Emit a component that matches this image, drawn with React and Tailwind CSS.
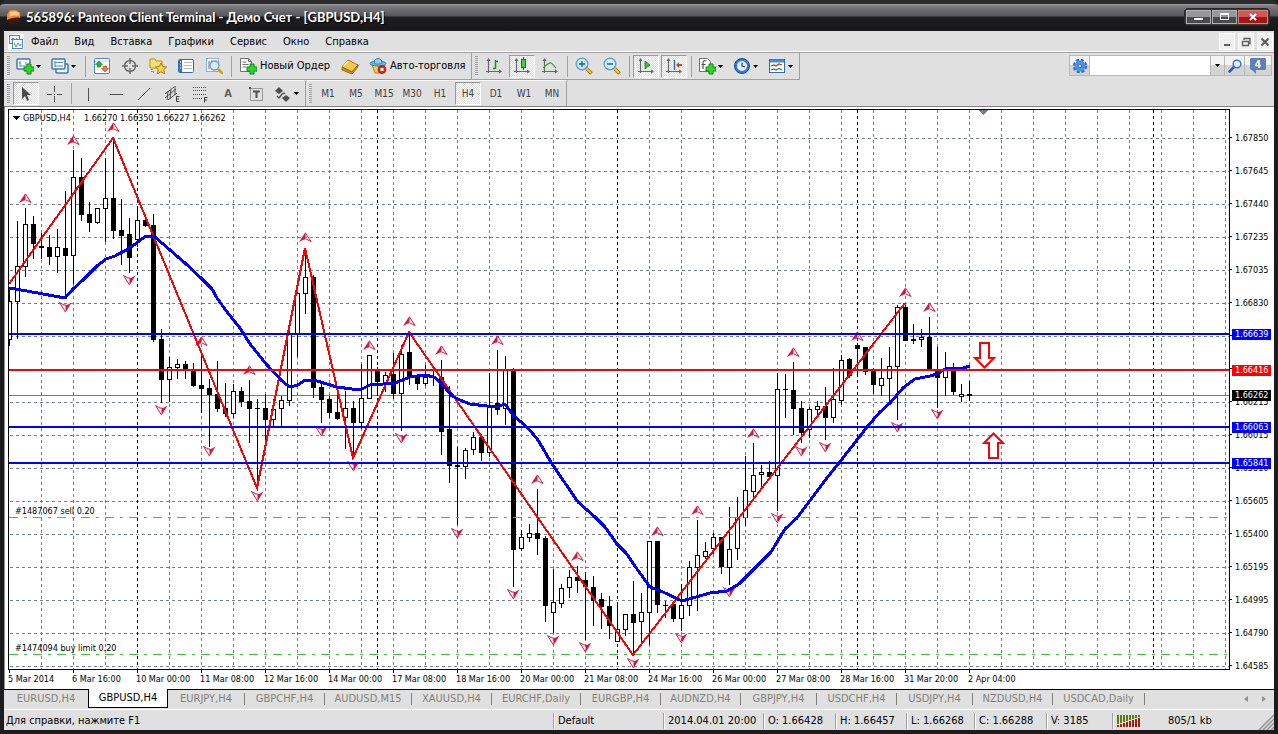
import React, { useState } from 'react';

// Plot geometry: one bar every 8px, a price step every 33px
const BAR = 8;
const PLOT_X = 9;
const PLOT_Y = 110;

// [high, low, body top, body bottom, kind] kind: 0 hollow, 1 filled
const bars = [
  [290, 346, 301, 340, 0], [221, 339, 266, 302, 0], [208, 277, 224, 267, 0], [216, 259, 224, 244, 1],
  [233, 259, 246, 248, 1], [235, 265, 247, 257, 1], [229, 273, 247, 257, 0], [191, 297, 248, 256, 1],
  [150, 284, 177, 256, 0], [158, 221, 177, 215, 1], [202, 232, 214, 223, 1], [208, 224, 208, 223, 0],
  [158, 242, 198, 209, 0], [138, 239, 198, 231, 1], [199, 265, 230, 236, 1], [218, 273, 234, 258, 1],
  [209, 247, 220, 240, 0], [215, 227, 220, 226, 1], [214, 342, 225, 340, 1], [329, 403, 339, 380, 1],
  [357, 402, 367, 380, 0], [359, 379, 364, 368, 0], [361, 379, 364, 369, 1], [363, 387, 370, 386, 1],
  [352, 413, 385, 389, 1], [379, 447, 388, 395, 1], [361, 412, 394, 409, 1], [383, 417, 408, 414, 1],
  [384, 418, 391, 414, 0], [387, 407, 391, 402, 1], [380, 443, 401, 409, 1], [399, 487, 408, 409, 1],
  [394, 443, 408, 420, 1], [399, 426, 409, 420, 0], [396, 426, 400, 409, 0], [330, 406, 333, 401, 0],
  [292, 357, 293, 334, 0], [250, 314, 277, 294, 0], [275, 398, 277, 388, 1], [383, 423, 387, 400, 1],
  [396, 418, 399, 413, 1], [394, 420, 412, 419, 1], [391, 449, 408, 418, 0], [401, 457, 408, 423, 1],
  [364, 429, 398, 423, 0], [355, 399, 355, 399, 0], [367, 396, 371, 382, 1], [372, 392, 375, 383, 0],
  [353, 399, 374, 394, 1], [345, 431, 354, 394, 0], [333, 385, 352, 378, 1], [374, 390, 377, 384, 1],
  [365, 386, 377, 384, 0], [370, 386, 377, 378, 1], [360, 455, 377, 432, 1], [386, 483, 429, 466, 1],
  [447, 525, 465, 467, 1], [448, 479, 450, 467, 0], [432, 455, 437, 450, 0], [434, 461, 437, 453, 1],
  [373, 457, 406, 453, 0], [350, 415, 403, 410, 1], [356, 425, 370, 409, 0], [368, 587, 369, 550, 1],
  [530, 551, 537, 549, 0], [524, 542, 533, 538, 0], [489, 555, 533, 539, 1], [536, 622, 538, 606, 1],
  [569, 633, 602, 613, 0], [584, 608, 588, 604, 0], [570, 598, 577, 588, 0], [566, 593, 577, 581, 1],
  [572, 640, 580, 587, 1], [576, 626, 587, 601, 1], [593, 629, 599, 607, 1], [596, 639, 606, 626, 1],
  [605, 642, 629, 642, 0], [614, 636, 614, 630, 0], [581, 654, 614, 623, 1], [593, 643, 612, 622, 0],
  [541, 645, 541, 613, 0], [541, 613, 541, 605, 1], [601, 618, 605, 606, 1], [602, 622, 604, 619, 1],
  [584, 631, 605, 619, 0], [561, 616, 567, 606, 0], [520, 611, 555, 568, 0], [542, 559, 551, 557, 0],
  [533, 554, 537, 549, 0], [537, 574, 537, 567, 1], [507, 585, 549, 568, 0], [497, 560, 517, 549, 0],
  [456, 526, 490, 518, 0], [443, 498, 475, 492, 0], [465, 488, 472, 475, 0], [461, 477, 472, 477, 1],
  [373, 511, 389, 476, 0], [374, 418, 389, 390, 1], [362, 435, 390, 409, 1], [401, 443, 408, 433, 1],
  [407, 438, 409, 430, 0], [401, 415, 406, 410, 0], [387, 440, 406, 418, 1], [368, 423, 399, 418, 0],
  [355, 405, 360, 401, 0], [358, 378, 359, 376, 1], [343, 375, 345, 349, 1], [347, 375, 347, 372, 1],
  [368, 394, 370, 385, 1], [358, 396, 378, 386, 0], [347, 401, 366, 379, 0], [305, 420, 307, 367, 0],
  [305, 341, 307, 341, 1], [324, 344, 339, 341, 1], [329, 347, 337, 340, 0], [317, 370, 337, 370, 1],
  [347, 408, 370, 378, 1], [352, 396, 370, 378, 0], [363, 395, 370, 392, 1], [384, 402, 394, 397, 0],
  [381, 401, 394, 396, 1],
];

const zigzag = '9,284 113,138 257,488 305,248 353,458 409,332 633,655 905,303';

const average =
  '9,288 27,291 43,294 65,298 73,289 83,280 97,266 106,259 115,256 130,248 146,236 155,237 170,250 185,263 202,279 212,289 ' +
  '217,298 227,312 240,328 250,344 267,365 282,381 290,387 298,385 305,380 317,381 337,387 352,389 362,389 370,385 383,384 ' +
  '395,383 410,377 425,375 434,377 442,384 452,396 460,400 470,404 487,406 499,406 505,404 513,415 528,428 538,440 552,464 ' +
  '578,502 595,517 605,527 617,544 626,553 637,569 650,587 663,592 682,601 710,593 727,591 739,584 753,570 771,552 785,529 ' +
  '797,518 827,478 835,468 857,440 867,427 880,412 890,403 903,388 915,379 930,376 937,374 945,369 963,368 970,366';

const fractalsUp = [
  [25, 198], [73, 140], [113, 127], [201, 341], [249, 370], [305, 237], [369, 345], [409, 321], [441, 350], [497, 340],
  [537, 479], [577, 556], [657, 531], [697, 510], [753, 433], [793, 352], [857, 336], [905, 292], [929, 307],
];
const fractalsDown = [
  [65, 307], [129, 280], [161, 410], [209, 451], [257, 496], [321, 431], [353, 466], [401, 438], [457, 533], [513, 594],
  [553, 640], [585, 647], [633, 663], [681, 638], [729, 592], [777, 518], [801, 451], [825, 447], [897, 427], [937, 414],
];

const gridX = Array.from({ length: 38 }, (_, i) => 41 + i * 32);
const gridY = Array.from({ length: 17 }, (_, i) => 138 + i * 33);
const weekLines = [137, 377, 617, 857, 1153];

const prices = [
  '1.67850', '1.67645', '1.67440', '1.67235', '1.67035', '1.66830', '', '', '1.66215', '1.66015', '1.65810',
  '1.65605', '1.65400', '1.65195', '1.64995', '1.64790', '1.64585',
];

const tags = [
  { price: '1.66639', y: 334, className: 'bg-[#0000ff]' },
  { price: '1.66416', y: 370, className: 'bg-[#ff0000]' },
  { price: '1.66262', y: 395, className: 'bg-black' },
  { price: '1.66063', y: 427, className: 'bg-[#0000ff]' },
  { price: '1.65841', y: 463, className: 'bg-[#0000ff]' },
];

const times = [
  '5 Mar 2014', '6 Mar 16:00', '10 Mar 00:00', '11 Mar 08:00', '12 Mar 16:00', '14 Mar 00:00', '17 Mar 08:00',
  '18 Mar 16:00', '20 Mar 00:00', '21 Mar 08:00', '24 Mar 16:00', '26 Mar 00:00', '27 Mar 08:00', '28 Mar 16:00',
  '31 Mar 20:00', '2 Apr 04:00',
];

const tabs = [
  { name: 'EURUSD,H4', width: 'w-[84px]' },
  { name: 'GBPUSD,H4', width: 'w-[80px]' },
  { name: 'EURJPY,H4', width: 'w-[77px]' },
  { name: 'GBPCHF,H4', width: 'w-[80px]' },
  { name: 'AUDUSD,M15', width: 'w-[87px]' },
  { name: 'XAUUSD,H4', width: 'w-[80px]' },
  { name: 'EURCHF,Daily', width: 'w-[89px]' },
  { name: 'EURGBP,H4', width: 'w-[80px]' },
  { name: 'AUDNZD,H4', width: 'w-[80px]' },
  { name: 'GBPJPY,H4', width: 'w-[76px]' },
  { name: 'USDCHF,H4', width: 'w-[80px]' },
  { name: 'USDJPY,H4', width: 'w-[76px]' },
  { name: 'NZDUSD,H4', width: 'w-[80px]' },
  { name: 'USDCAD,Daily', width: 'w-[92px]' },
];

const menu = ['Файл', 'Вид', 'Вставка', 'Графики', 'Сервис', 'Окно', 'Справка'];
const periods = ['M1', 'M5', 'M15', 'M30', 'H1', 'H4', 'D1', 'W1', 'MN'];

const PRESSED =
  'border border-t-[#9a9a9a] border-l-[#9a9a9a] border-r-white border-b-white bg-[repeating-conic-gradient(#e0e0e0_0_25%,#fafafa_0_50%)] bg-[length:2px_2px]';

/* ---------- icons ---------- */

const Icon = ({ children, size = 18 }) => (
  <svg width={size} height={size} viewBox="0 0 18 18" fill="none" className="shrink-0" aria-hidden="true">
    {children}
  </svg>
);

const PlusBadge = () => (
  <path d="M11 7h4v3h3v4h-3v3h-4v-3H8v-4h3z" fill="#2fd52f" stroke="#0c8a0c" />
);

const NewChartIcon = () => (
  <Icon>
    <rect x="1" y="2" width="13" height="10" rx="1" fill="#fff" stroke="#3c78b8" strokeWidth="1.5" />
    <path d="M4 4v6M3 6h2M4 9h8M10 5v3" stroke="#5a8cc4" />
    <PlusBadge />
  </Icon>
);

const ProfilesIcon = () => (
  <Icon>
    <rect x="5" y="7" width="12" height="9" rx="1" fill="#fff" stroke="#3c78b8" strokeWidth="1.5" />
    <rect x="1" y="2" width="13" height="10" rx="1" fill="#f4f8fc" stroke="#3c78b8" strokeWidth="1.5" />
    <path d="M3 5.500h9M3 9h9M4 4v6" stroke="#5a8cc4" />
  </Icon>
);

const MarketWatchIcon = () => (
  <Icon>
    <rect x="1.5" y="1.5" width="15" height="15" rx="1" fill="#fff" stroke="#4a86c4" />
    <path d="M2 4h14" stroke="#b8d0e8" />
    <path d="M6 4l3.500 3.500H7.500V10h-3V7.500h-2z" fill="#25b825" stroke="#0c7a0c" strokeWidth=".6" />
    <path d="M12 15l-3.500-3.500h2V9h3v2.500h2z" fill="#f08040" stroke="#b8340c" strokeWidth=".6" />
  </Icon>
);

const DataWindowIcon = () => (
  <Icon>
    <circle cx="9" cy="9" r="5.500" stroke="#6c6c6c" strokeWidth="1.500" />
    <path d="M9 1v6M9 11v6M1 9h6M11 9h6" stroke="#6c6c6c" strokeWidth="1.500" />
  </Icon>
);

const NavigatorIcon = () => (
  <Icon>
    <path d="M1 2h5l1 2h6v7H1z" fill="#fbe070" stroke="#b8921c" />
    <path d="M3 12v3h3" stroke="#555" strokeDasharray="1 1" />
    <path d="M12 6l1.700 3.600 4 .4-3 2.700.9 4-3.600-2-3.600 2 .9-4-3-2.700 4-.4z" fill="#fcd63c" stroke="#b07c10" />
  </Icon>
);

const TerminalIcon = () => (
  <Icon>
    <rect x="1.500" y="2.500" width="15" height="13" rx="1" fill="#fff" stroke="#2f6cb0" />
    <path d="M2 3h3v12H2z" fill="#2f78c8" />
    <path d="M3 5h1M3 8h1M3 11h1" stroke="#fff" />
    <path d="M7 5.500h8M7 8.500h8M7 11.500h8" stroke="#a8bcd8" />
  </Icon>
);

const TesterIcon = () => (
  <Icon>
    <rect x="1.500" y="1.500" width="12" height="13" fill="#fff" stroke="#8ab0d4" />
    <path d="M4 4v8M7 3v6M11 3v5" stroke="#606c78" />
    <circle cx="9.500" cy="8.500" r="4.500" fill="#d4eafa" fillOpacity=".85" stroke="#6a9cc8" strokeWidth="1.300" />
    <path d="M13 12l4 4" stroke="#d8a020" strokeWidth="2.500" strokeLinecap="round" />
  </Icon>
);

const NewOrderIcon = () => (
  <Icon>
    <path d="M1.500 1.500h8l3 3v10h-11z" fill="#fff" stroke="#707070" />
    <path d="M9.500 1.500v3h3M3.500 5h4M3.500 7.500h6M3.500 10h4" stroke="#707070" />
    <PlusBadge />
  </Icon>
);

const BookIcon = () => (
  <Icon>
    <path d="M1 10l6-7 10 5-6 7z" fill="#f6c84c" stroke="#a87414" />
    <path d="M1 10v3l10 4 6-7V8l-6 7z" fill="#d09020" stroke="#8c5c0c" strokeWidth=".8" />
    <path d="M7 4l-5 6" stroke="#fdeaa0" strokeWidth="1.500" />
  </Icon>
);

const AutoTradeIcon = () => (
  <Icon>
    <path d="M3 8l3 8h7l3-8z" fill="#f4cc50" stroke="#b08018" />
    <ellipse cx="9" cy="6.500" rx="8" ry="2.500" fill="#6cb8e4" stroke="#3c84b8" />
    <path d="M5 6c0-6 8-6 8 0-2 1.500-6 1.500-8 0z" fill="#8cccf0" stroke="#3c84b8" />
    <circle cx="13" cy="12.500" r="4" fill="#e02818" stroke="#a01008" strokeWidth=".7" />
    <rect x="11.500" y="11" width="3" height="3" fill="#fff" />
  </Icon>
);

const Axes = () => (
  <path d="M3.500 2v14M1 14.500h15M2 4l1.500-2L5 4M14 13l2 1.500-2 1.500" stroke="#686868" strokeWidth="1.200" />
);

const BarsIcon = () => (
  <Icon>
    <Axes />
    <path d="M10.500 3v9M8 11.500h2M11 4.500h2" stroke="#189018" strokeWidth="1.500" />
  </Icon>
);

const CandlesIcon = () => (
  <Icon>
    <Axes />
    <path d="M10.500 0v13" stroke="#0c7a0c" />
    <rect x="8.500" y="2.500" width="4" height="8" fill="#38d838" stroke="#0c7a0c" />
  </Icon>
);

const LineIcon = () => (
  <Icon>
    <Axes />
    <path d="M2 11c3-2 5-6 8-5 2 1 3 3 5 5" stroke="#30a030" strokeWidth="1.300" />
  </Icon>
);

const ZoomIcon = ({ out }) => (
  <Icon>
    <path d="M11.500 11.500l5 5" stroke="#9c6c10" strokeWidth="3.500" />
    <path d="M11.500 11.500l4.500 4.500" stroke="#f4c83c" strokeWidth="2" />
    <circle cx="7" cy="7" r="5.800" fill="#d8effc" stroke="#58a0d8" strokeWidth="1.400" />
    <path d={out ? 'M4 7h6' : 'M4 7h6M7 4v6'} stroke="#3478b4" strokeWidth="1.800" />
  </Icon>
);

const AutoScrollIcon = () => (
  <Icon>
    <Axes />
    <path d="M8 4l5 4-5 4z" fill="#30c830" stroke="#0c800c" strokeWidth=".8" />
  </Icon>
);

const ShiftIcon = () => (
  <Icon>
    <Axes />
    <path d="M9.500 3v10" stroke="#2868b0" strokeWidth="1.400" />
    <path d="M11 8l3-3v2h3v2h-3v2z" fill="#c84818" />
  </Icon>
);

const IndicatorsIcon = () => (
  <Icon>
    <path d="M1.500 1.500h8l3 3v10h-11z" fill="#fff" stroke="#707070" />
    <path d="M8 4c-2-1-3 0-3 2v6M3.500 7.500h4" stroke="#505050" strokeWidth="1.200" />
    <PlusBadge />
  </Icon>
);

const ClockIcon = () => (
  <Icon>
    <circle cx="9" cy="9" r="7.500" fill="#2c7cd8" stroke="#144c98" />
    <circle cx="9" cy="9" r="5" fill="#e8f2fc" />
    <path d="M9 5.500V9l3 1" stroke="#404040" strokeWidth="1.200" />
  </Icon>
);

const TemplateIcon = () => (
  <Icon>
    <rect x="1.500" y="2.500" width="15" height="13" fill="#fff" stroke="#2f6cb0" />
    <path d="M2 4h14" stroke="#4a8ad0" strokeWidth="3" />
    <path d="M3 9l3-1 2 1 3-2 3 1" stroke="#a83820" strokeWidth="1.200" />
    <path d="M3 13l3-1 2 1 3-1.500 3 1.500" stroke="#208c30" strokeWidth="1.200" />
  </Icon>
);

const PointerIcon = () => (
  <Icon>
    <path d="M5 2v12l3-3 2 5 2-1-2-5h4z" fill="#4c4c4c" />
  </Icon>
);
const CrossIcon = () => (
  <Icon>
    <path d="M9.500 1v6M9.500 11v6M2 9.500h5M12 9.500h5M9 9.500h1" stroke="#505050" />
  </Icon>
);
const VLineIcon = () => (
  <Icon>
    <path d="M9.500 3v13" stroke="#505050" />
  </Icon>
);
const HLineIcon = () => (
  <Icon>
    <path d="M3 9.500h13" stroke="#505050" />
  </Icon>
);
const TrendIcon = () => (
  <Icon>
    <path d="M3 15L15 3" stroke="#505050" />
  </Icon>
);
const ChannelIcon = () => (
  <Icon>
    <path d="M2 13L13 4M2 9l9-7M5 15l9-7M5 6l-1 9M8 4l-1 10M12 1v9" stroke="#505050" />
    <path d="M16.500 11.500h-3v5h3M13.500 14h2.500" stroke="#404040" />
  </Icon>
);
const FiboIcon = () => (
  <Icon>
    <path d="M2 2.500h14M2 5.500h14M2 9.500h14M2 13.500h9" stroke="#505050" strokeDasharray="1 1" />
    <path d="M16.500 12.500h-3v5M13.500 15h2.500" stroke="#404040" />
  </Icon>
);
const LabelIcon = () => (
  <Icon>
    <rect x="3.500" y="3.500" width="12" height="12" stroke="#505050" strokeDasharray="1 1" />
    <path d="M6 6.500h7M9.500 6v7" stroke="#505050" strokeWidth="2" />
    <path d="M2 2h2v2H2z" fill="#505050" />
  </Icon>
);
const ArrowsIcon = () => (
  <Icon>
    <path d="M5 2l4 4-4 3-4-3zM12 10l4 3-4 4-4-4z" fill="#505050" />
    <path d="M3 11l2 2 3-4 3-1" stroke="#505050" strokeWidth="1.400" />
  </Icon>
);

const Caret = () => (
  <svg width="5" height="3" viewBox="0 0 5 3" className="shrink-0" aria-hidden="true">
    <path d="M0 0h5L2.500 3z" fill="#000" />
  </svg>
);

/* ---------- toolbar parts ---------- */

const Grip = () => (
  <div className="w-2 shrink-0 flex justify-center">
    <div className="w-[3px] h-5 bg-[repeating-linear-gradient(#a0a0a0_0_1px,transparent_1px_2px)]" />
  </div>
);

const Separator = () => (
  <div className="w-1.5 shrink-0 flex justify-center">
    <div className="w-px h-[21px] bg-[#a0a0a0]" />
  </div>
);

const ToolButton = ({ label, icon, pressed, menu: hasMenu }) => (
  <button
    type="button"
    aria-label={label}
    className={`h-6 shrink-0 flex items-center ${hasMenu ? 'w-[35px] pl-1 gap-0.5' : 'w-7 justify-center'}`}
  >
    {pressed ? <span className={`w-[26px] h-[23px] flex items-center justify-center ${PRESSED}`}>{icon}</span> : icon}
    {hasMenu && <Caret />}
  </button>
);

const TextButton = ({ icon, children }) => (
  <button type="button" className="h-6 shrink-0 flex items-center gap-[3px] pl-[5px] pr-1.5">
    {icon}
    <span>{children}</span>
  </button>
);

const TitleBar = () => (
  <header className="h-[31px] shrink-0 pt-1 px-1.5 flex items-center rounded-t-md border-t-4 border-[#2c2c2e] bg-[linear-gradient(#a2a2a6_0,#7c7c80_2px,#57575b_12px,#1f1f22_13px,#161618_100%)]">
    <svg width="16" height="16" viewBox="0 0 16 16" className="shrink-0 -mt-1.5" aria-hidden="true">
      <path d="M3 2h10l2 3v6l-3 4H4l-3-3V5z" fill="#3c1808" />
      <path d="M3 2c3-2 8-1 11 1 1 2 1 4 0 6C10 8 5 9 1 11V5z" fill="#f4862c" />
      <path d="M4 3c3-1 6-1 9 1v3C9 6 5 7 3 8z" fill="#fcc888" />
    </svg>
    <h1 className="ml-1 -mt-1.5 flex-1 truncate font-[Lato,'Open_Sans',sans-serif] font-bold text-[13px] leading-4 text-white [text-shadow:1px_1px_1px_#000]">
      565896: Panteon Client Terminal - Демо Счет - [GBPUSD,H4]
    </h1>
    <div className="-mt-1.5 mr-0.5 flex gap-px rounded-sm border border-[#2a2a2a] p-px bg-[#3a3a3c]">
      <button type="button" aria-label="Свернуть" className="w-[25px] h-3.5 flex items-center justify-center border border-[#b0b0b0] bg-[linear-gradient(#98989c_50%,#4a4a4e_50%)]">
        <span className="w-[9px] h-0.5 mt-1 bg-white" />
      </button>
      <button type="button" aria-label="Развернуть" className="w-[25px] h-3.5 flex items-center justify-center border border-[#b0b0b0] bg-[linear-gradient(#98989c_50%,#4a4a4e_50%)]">
        <span className="w-[9px] h-[7px] border border-t-2 border-white" />
      </button>
      <button type="button" aria-label="Закрыть" className="w-[30px] h-3.5 flex items-center justify-center border border-[#d08080] bg-[linear-gradient(#d05858_50%,#a81414_50%)]">
        <svg width="8" height="8" viewBox="0 0 8 8" aria-hidden="true">
          <path d="M1 1l6 6M7 1L1 7" stroke="#fff" strokeWidth="2" />
        </svg>
      </button>
    </div>
  </header>
);

const MdiButton = ({ label, children }) => (
  <button type="button" aria-label={label} className="w-4 h-[17px] flex items-center justify-center bg-[#f0f0f0] border border-white">
    <svg width="10" height="10" viewBox="0 0 10 10" fill="none" stroke="#606060" aria-hidden="true">
      {children}
    </svg>
  </button>
);

const MenuBar = () => (
  <nav className="h-[22px] shrink-0 pl-1 flex items-center border-b border-[#a0a0a0] shadow-[inset_0_-1px_0_#fff]">
    <svg width="16" height="16" viewBox="0 0 16 16" fill="none" className="shrink-0" aria-hidden="true">
      <rect width="16" height="16" fill="#fff" />
      <rect x="1.500" y="1.500" width="10" height="8" fill="#eef5fc" stroke="#4a86c8" />
      <rect x="4.500" y="5.500" width="10" height="9" fill="#fff" stroke="#4a86c8" />
      <path d="M3 6l2-2 2 2 2-2M6 9l2 4 2-4 2 3 1-2" stroke="#4a86c8" />
    </svg>
    <ul className="flex-1 flex items-center gap-4 ml-[7px] text-[11px]">
      {menu.map((item) => (
        <li key={item}>
          <button type="button">{item}</button>
        </li>
      ))}
    </ul>
    <div className="flex gap-[3px] pr-px">
      <MdiButton label="Свернуть окно">
        <path d="M2 8h6" strokeWidth="2" />
      </MdiButton>
      <MdiButton label="Восстановить окно">
        <path d="M3 3V1.500h6v5H7.500M1.500 4.500h6v4h-6z" strokeWidth="1.300" />
      </MdiButton>
      <MdiButton label="Закрыть окно">
        <path d="M1.500 1.500l7 7M8.500 1.500l-7 7" strokeWidth="2.200" />
      </MdiButton>
    </div>
  </nav>
);

const MainToolbar = () => (
  <div className="flex items-start justify-between">
    <div className="h-[27px] flex items-center border-r border-b border-[#a0a0a0]">
      <Grip />
      <ToolButton label="Новый график" icon={<NewChartIcon />} menu />
      <ToolButton label="Профили" icon={<ProfilesIcon />} menu />
      <Separator />
      <ToolButton label="Обзор рынка" icon={<MarketWatchIcon />} />
      <ToolButton label="Окно данных" icon={<DataWindowIcon />} />
      <ToolButton label="Навигатор" icon={<NavigatorIcon />} />
      <ToolButton label="Терминал" icon={<TerminalIcon />} />
      <ToolButton label="Тестер стратегий" icon={<TesterIcon />} />
      <Separator />
      <TextButton icon={<NewOrderIcon />}>Новый Ордер</TextButton>
      <ToolButton label="Редактор" icon={<BookIcon />} />
      <TextButton icon={<AutoTradeIcon />}>Авто-торговля</TextButton>
      <div className="w-px self-stretch bg-[#a0a0a0]" />
      <Grip />
      <ToolButton label="Бары" icon={<BarsIcon />} />
      <ToolButton label="Свечи" icon={<CandlesIcon />} pressed />
      <ToolButton label="Линия" icon={<LineIcon />} />
      <Separator />
      <ToolButton label="Увеличить" icon={<ZoomIcon />} />
      <ToolButton label="Уменьшить" icon={<ZoomIcon out />} />
      <Separator />
      <ToolButton label="Автопрокрутка" icon={<AutoScrollIcon />} pressed />
      <ToolButton label="Сдвиг графика" icon={<ShiftIcon />} pressed />
      <Separator />
      <ToolButton label="Индикаторы" icon={<IndicatorsIcon />} menu />
      <ToolButton label="Периоды" icon={<ClockIcon />} menu />
      <ToolButton label="Шаблоны" icon={<TemplateIcon />} menu />
    </div>

    {/* Search */}
    <div className="mt-0.5 mr-0.5 h-[21px] flex border border-[#b8b8b8] divide-x divide-[#b8b8b8] bg-[#e4e4e4]">
      <button type="button" aria-label="Настройки поиска" className="w-5 flex items-center justify-center bg-[linear-gradient(#f4f4f4_50%,#d4d4d4_50%)]">
        <svg width="16" height="16" viewBox="0 0 16 16" aria-hidden="true">
          <circle cx="8" cy="8" r="6" fill="none" stroke="#2c6cc8" strokeWidth="2.500" strokeDasharray="3 1.710" />
          <circle cx="8" cy="8" r="5.500" fill="#4a90e8" />
          <circle cx="8" cy="8" r="1.800" fill="#e8f0fc" stroke="#2c6cc8" />
        </svg>
      </button>
      <input type="text" aria-label="Поиск" className="w-[121px] px-1 bg-white outline-none" />
      <button type="button" aria-label="История поиска" className="w-3.5 flex items-center justify-center bg-[linear-gradient(#f4f4f4_50%,#d4d4d4_50%)]">
        <Caret />
      </button>
      <button type="button" aria-label="Найти" className="w-5 flex items-center justify-center bg-[linear-gradient(#f4f4f4_50%,#d4d4d4_50%)]">
        <svg width="14" height="14" viewBox="0 0 14 14" fill="none" aria-hidden="true">
          <path d="M6 8l-4.500 4.500" stroke="#2c5cb0" strokeWidth="2.500" strokeLinecap="round" />
          <circle cx="9" cy="5" r="3.800" fill="#e8f2fc" stroke="#3c74cc" strokeWidth="1.500" />
        </svg>
      </button>
      <button type="button" aria-label="Сообщения" className="w-[26px] flex items-center justify-center bg-[linear-gradient(#f4f4f4_50%,#d4d4d4_50%)]">
        <svg width="16" height="16" viewBox="0 0 16 16" aria-hidden="true">
          <path d="M1 0h14l1 1v10l-1 1H6v4l-4-4H1l-1-1V1z" fill="#6080b4" />
          <text x="8" y="10" textAnchor="middle" className="font-bold text-[10px]" fill="#fff">4</text>
        </svg>
      </button>
    </div>
  </div>
);

const DrawToolbar = () => {
  const [period, setPeriod] = useState('H4');
  return (
    <div className="flex border-b border-[#808080]">
      <div className="h-[26px] flex items-center border-t border-t-[#f8f8f8] border-r border-r-[#a0a0a0]">
        <Grip />
        <ToolButton label="Курсор" icon={<PointerIcon />} pressed />
        <ToolButton label="Перекрестие" icon={<CrossIcon />} />
        <Separator />
        <ToolButton label="Вертикальная линия" icon={<VLineIcon />} />
        <ToolButton label="Горизонтальная линия" icon={<HLineIcon />} />
        <ToolButton label="Трендовая линия" icon={<TrendIcon />} />
        <ToolButton label="Канал" icon={<ChannelIcon />} />
        <ToolButton label="Фибоначчи" icon={<FiboIcon />} />
        <ToolButton label="Текст" icon={<span className="font-bold text-[11px] text-[#606060]">A</span>} />
        <ToolButton label="Метка" icon={<LabelIcon />} />
        <ToolButton label="Стрелки" icon={<ArrowsIcon />} menu />
        <div className="w-px self-stretch bg-[#a0a0a0]" />
        <Grip />
        {periods.map((p) => (
          <button
            key={p}
            type="button"
            onClick={() => setPeriod(p)}
            className="w-7 h-6 flex items-center justify-center text-[10px] text-[#404040]"
          >
            <span className={`w-[26px] h-[23px] flex items-center justify-center ${p === period ? PRESSED : ''}`}>{p}</span>
          </button>
        ))}
      </div>
    </div>
  );
};

/* ---------- chart ---------- */

const Candle = ({ x, bar: [high, low, top, bottom, filled] }) => (
  <g>
    <rect x={x} y={high} width="1" height={low - high} fill="#000" />
    <rect x={x - 2} y={top} width="5" height={bottom - top} fill="#000" />
    {!filled && <rect x={x - 1} y={top + 1} width="3" height={Math.max(bottom - top - 2, 1)} fill="#fff" />}
  </g>
);

const Plot = () => (
  <svg className="block size-full" shapeRendering="crispEdges" role="img" aria-label="GBPUSD,H4">
    <g transform={`translate(${-PLOT_X} ${-PLOT_Y})`}>
      {/* Grid */}
      <g stroke="#708090" strokeDasharray="3 3">
        {gridX.map((x) => (
          <line key={x} x1={x + 0.5} x2={x + 0.5} y1="110" y2="669" />
        ))}
        {gridY.map((y) => (
          <line key={y} x1="10" x2="1229" y1={y + 0.5} y2={y + 0.5} />
        ))}
      </g>
      {weekLines.map((x) => (
        <g key={x}>
          <rect x={x} y="110" width="1" height="559" fill="#fff" />
          <line x1={x + 0.5} x2={x + 0.5} y1="110" y2="669" stroke="#000" strokeDasharray="3 3" />
        </g>
      ))}
      <rect x="9" y="395" width="100%" height="1" fill="#708090" />

      {bars.map((bar, i) => (
        <Candle key={i} x={PLOT_X + i * BAR} bar={bar} />
      ))}

      {/* Orders */}
      <g stroke="#32cd32" strokeDasharray="9 6 3 6">
        <line x1="9" x2="1229" y1="517.5" y2="517.5" />
        <line x1="9" x2="1229" y1="654.5" y2="654.5" />
      </g>
      <g className="font-['DejaVu_Sans_Condensed','DejaVu_Sans',sans-serif] text-[9px]">
        <text x="15" y="514">#1487067 sell 0.20</text>
        <text x="15" y="651">#1474094 buy limit 0.20</text>
        <path d="M12 116h8l-4 4z" />
        <text x="23" y="121">GBPUSD,H4</text>
        <text x="84" y="121">1.66270 1.66350 1.66227 1.66262</text>
      </g>

      {/* Fractals */}
      {fractalsUp.map(([x, y]) => (
        <g key={`${x}-${y}`} transform={`translate(${x} ${y})`} shapeRendering="auto">
          <path d="M.5-5L-6 5l5-2.500h1.500z" fill="#dc143c" />
          <path d="M.5-4L6 4.500 1 2" fill="none" stroke="#dc143c" />
        </g>
      ))}
      {fractalsDown.map(([x, y]) => (
        <g key={`${x}-${y}`} transform={`translate(${x} ${y})`} shapeRendering="auto">
          <path d="M.5 5.500L6.500-4.500 2-2H.5z" fill="#dc143c" />
          <path d="M.5 5L-5.500-4.500-1-2H1" fill="none" stroke="#dc143c" />
        </g>
      ))}

      <polyline points={zigzag} fill="none" stroke="#f00" strokeWidth="2" />
      <polyline points={average} fill="none" stroke="#00f" strokeWidth="3" strokeLinejoin="round" />

      {/* Levels */}
      <rect x="9" y="333" width="100%" height="2" fill="#00f" />
      <rect x="9" y="369" width="100%" height="2" fill="#f00" />
      <rect x="9" y="426" width="100%" height="2" fill="#00f" />
      <rect x="9" y="462" width="100%" height="2" fill="#00f" />

      <g fill="#fff" stroke="#f00" strokeWidth="2" shapeRendering="auto">
        <path d="M980 343h9v15h5l-9.500 9.500L975 358h5z" />
        <path d="M989 458h9V443h5l-9.500-9.500L984 443h5z" />
      </g>
      <path d="M979 110h9l-4.500 5z" fill="#708090" />
    </g>
  </svg>
);

const Chart = () => (
  <main className="flex-1 min-h-0 flex flex-col bg-white border-l border-[#909090] pl-[3px] pt-0.5 overflow-hidden">
    <div className="flex-1 min-h-0 flex">
      <div className="flex-1 min-w-0 border border-black overflow-hidden">
        <Plot />
      </div>
      <div className="relative w-11 shrink-0 pt-3 text-[9px]">
        {prices.map((price, i) => (
          <div key={i} className="h-[33px] flex items-center gap-[3px] leading-3">
            <span className="w-0.5 h-px bg-black" />
            {price}
          </div>
        ))}
        {tags.map(({ price, y, className }) => (
          <div
            key={price}
            className={`absolute left-0.5 w-[39px] h-[11px] pl-[3px] leading-[11px] text-white ${className}`}
            style={{ top: y - PLOT_Y - 4 }}
          >
            {price}
          </div>
        ))}
      </div>
    </div>
    <div className="h-[19px] shrink-0 flex text-[9px] leading-3">
      {times.map((time) => (
        <div key={time} className="w-16 shrink-0 whitespace-nowrap">
          <div className="ml-px w-px h-[3px] bg-black" />
          {time}
        </div>
      ))}
    </div>
  </main>
);

const ChartTabs = () => {
  const [active, setActive] = useState('GBPUSD,H4');
  return (
    <div className="h-[21px] shrink-0 flex items-start border-t border-black shadow-[inset_0_-1px_0_#fff]">
      <div className="flex flex-1 min-w-0" role="tablist">
        {tabs.map(({ name, width }) => (
          <button
            key={name}
            type="button"
            role="tab"
            aria-selected={name === active}
            onClick={() => setActive(name)}
            className={`shrink-0 flex items-center text-[11px] leading-3 ${width} ${
              name === active
                ? 'h-[19px] -mt-px justify-center bg-white border border-t-0 border-black text-black'
                : 'h-[18px] text-[#808078]'
            }`}
          >
            <span className="flex-1 text-center">{name}</span>
            {name !== active && name !== 'EURUSD,H4' && <span className="w-px h-3 bg-[#808078]" />}
          </button>
        ))}
      </div>
      <div className="h-[18px] flex items-center gap-3.5 pr-2">
        <svg width="4" height="6" viewBox="0 0 4 6" aria-hidden="true">
          <path d="M4 0v6L0 3z" fill="#909090" />
        </svg>
        <svg width="4" height="6" viewBox="0 0 4 6" aria-hidden="true">
          <path d="M0 0v6l4-3z" fill="#909090" />
        </svg>
      </div>
    </div>
  );
};

const StatusCell = ({ className, children }) => (
  <div className={`h-4 shrink-0 flex items-center pl-1 border-l border-[#a0a0a0] shadow-[inset_1px_0_0_#fff] whitespace-nowrap ${className}`}>
    {children}
  </div>
);

const StatusBar = () => (
  <footer className="h-5 shrink-0 pt-0.5 flex items-center text-[11px]">
    <p className="flex-1 truncate pl-0.5">Для справки, нажмите F1</p>
    <StatusCell className="w-[110px]">Default</StatusCell>
    <StatusCell className="w-[100px]">2014.04.01 20:00</StatusCell>
    <StatusCell className="w-[72px]">O: 1.66428</StatusCell>
    <StatusCell className="w-[71px]">H: 1.66457</StatusCell>
    <StatusCell className="w-[68px]">L: 1.66268</StatusCell>
    <StatusCell className="w-[72px]">C: 1.66288</StatusCell>
    <StatusCell className="w-[66px]">V: 3185</StatusCell>
    <StatusCell className="w-[148px]">
      <svg width="24" height="12" viewBox="0 0 24 12" shapeRendering="crispEdges" aria-hidden="true">
        {[0, 1, 2, 3, 4, 5, 6, 7].map((i) => (
          <g key={i}>
            <rect x={i * 3} y="0" width="2" height={9 - i} fill="#5c7c0c" />
            <rect x={i * 3} y={10 - i} width="2" height={2 + i} fill="#a81c0c" />
          </g>
        ))}
      </svg>
      <span className="ml-[27px]">805/1 kb</span>
    </StatusCell>
    <svg width="16" height="16" viewBox="0 0 16 16" className="-ml-0.5 self-end shrink-0" aria-hidden="true">
      <path d="M1 16L16 1M5 16L16 5M9 16l7-7M13 16l3-3" stroke="#909090" strokeWidth="1.500" />
    </svg>
  </footer>
);

export default function App() {
  return (
    <div className="h-screen min-w-[1200px] flex flex-col bg-[#1c1c1e] font-['DejaVu_Sans_Condensed','DejaVu_Sans',sans-serif] text-[11px] leading-4 text-black">
      <TitleBar />
      <div className="flex-1 min-h-0 mx-1 mb-1 flex flex-col bg-[#e0e0e0]">
        <MenuBar />
        <MainToolbar />
        <DrawToolbar />
        <Chart />
        <ChartTabs />
        <StatusBar />
      </div>
    </div>
  );
}
